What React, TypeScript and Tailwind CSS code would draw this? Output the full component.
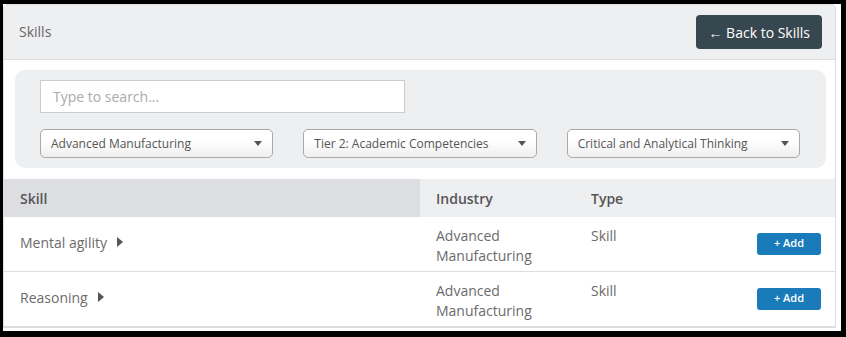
import React from "react";

const Caret = () => (
  <svg width="8" height="5" viewBox="0 0 8 5" className="shrink-0">
    <path d="M0 0 L8 0 L4 5 Z" fill="#555" />
  </svg>
);

const RightTri = () => (
  <svg width="6" height="10" viewBox="0 0 6 10" className="shrink-0">
    <path d="M0 0 L6 5 L0 10 Z" fill="#555" />
  </svg>
);

const Select = ({ label }: { label: string }) => (
  <div className="h-[29px] rounded-[5px] border border-[#aaa] bg-gradient-to-b from-white from-40% to-[#eee] flex items-center justify-between pl-[10px] pr-[10px]">
    <span className="text-[12px] text-[#555]">{label}</span>
    <Caret />
  </div>
);

const rows = [
  { name: "Mental agility" },
  { name: "Reasoning" },
];

export default function App() {
  return (
    <div
      className="w-[846px] h-[337px] bg-black pl-[3px] pt-[4px] pr-[5px] pb-[6px]"
      style={{ fontFamily: '"Open Sans", "Noto Sans", sans-serif' }}
    >
      <div className="w-full h-full bg-white pr-[5px]">
        <div className="border border-[#ddd] rounded-t-[4px] bg-white">
          <div className="h-[55px] bg-[#eeeff1] border-b border-[#ddd] flex items-center justify-between pl-[15px] pr-[13px]">
            <span className="text-[14px] text-[#666] -mt-[2px]">Skills</span>
            <button className="h-[34px] px-[12px] rounded-[4px] bg-[#37474f] text-white text-[14px] flex items-center">
              ← Back to Skills
            </button>
          </div>
          <div className="ml-[11px] mr-[9px] mt-[10px] rounded-[10px] bg-[#eeeff1] pl-[25px] pr-[26px] pt-[10px] pb-[10px]">
            <div className="w-[365px] h-[33px] border border-[#ccc] bg-white flex items-center pl-[12px]">
              <span className="text-[14px] text-[#aaa]">Type to search...</span>
            </div>
            <div className="grid grid-cols-3 gap-x-[30px] mt-[16px]">
              <Select label="Advanced Manufacturing" />
              <Select label="Tier 2: Academic Competencies" />
              <Select label="Critical and Analytical Thinking" />
            </div>
          </div>
          <div className="mt-[11px]">
            <div className="flex h-[38px] bg-[#eeeff1] text-[14px] font-semibold text-[#555]">
              <div className="w-[416px] bg-[#dcdee2] flex items-center pl-[16px]">Skill</div>
              <div className="w-[155px] flex items-center pl-[16px]">Industry</div>
              <div className="flex-1 flex items-center pl-[16px]">Type</div>
            </div>
            {rows.map((r, i) => (
              <div key={i} className="flex h-[55px] border-b border-[#ddd] text-[14px] text-[#6b6b6b]">
                <div className="w-[416px] flex items-center pl-[16px] pb-[4px] gap-[10px]">
                  <span>{r.name}</span>
                  <RightTri />
                </div>
                <div className="w-[155px] pl-[16px] pt-[9px] leading-[20px]">
                  Advanced
                  <br />
                  Manufacturing
                </div>
                <div className="flex-1 pl-[16px] pt-[9px] leading-[20px]">Skill</div>
                <div className="flex items-center pr-[14px] pb-[1px]">
                  <button className="w-[64px] h-[22px] rounded-[3px] bg-[#1a7bbb] text-white text-[11px] font-semibold flex items-center justify-center">
                    + Add
                  </button>
                </div>
              </div>
            ))}
          </div>
        </div>
      </div>
    </div>
  );
}
